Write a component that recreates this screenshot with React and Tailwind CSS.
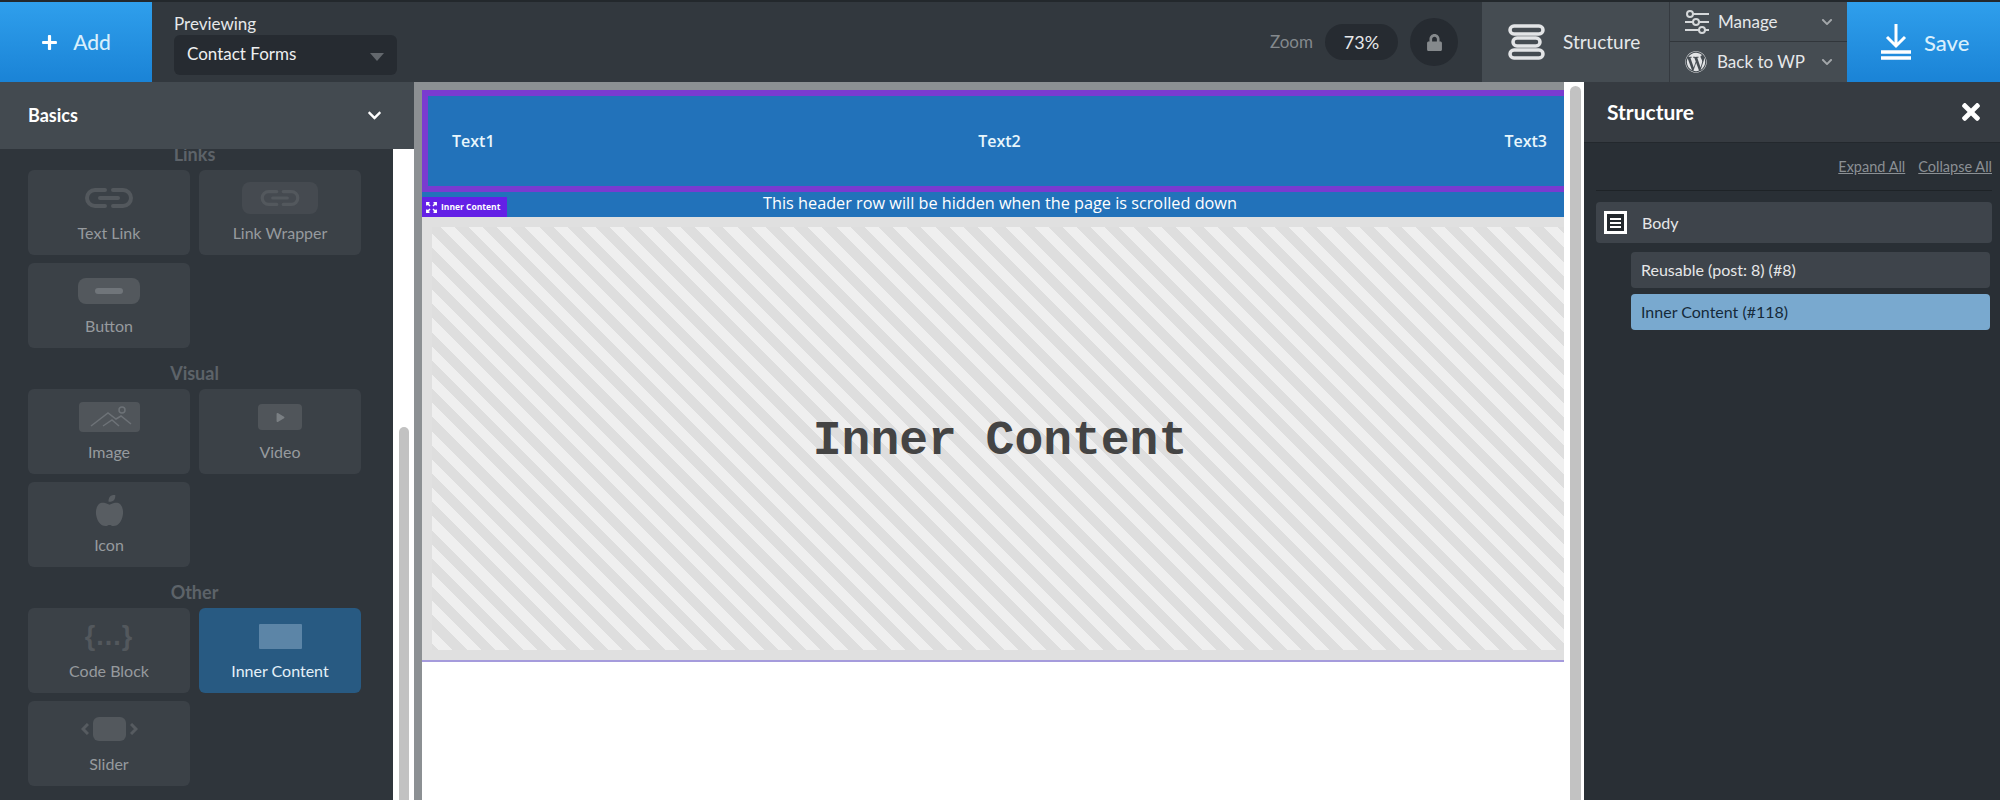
import React from "react";
import { FaLock, FaTimes, FaWordpress, FaAppleAlt, FaPlus, FaChevronDown, FaPlay } from "react-icons/fa";

const LinkGlyph = ({ w, h }) => (
  <svg width={w} height={h} viewBox="0 0 52 22" fill="none" stroke="#53585d" strokeWidth="4" strokeLinecap="round">
    <path d="M22 3H12a8 8 0 0 0 0 16h10" />
    <path d="M30 3h10a8 8 0 0 1 0 16H30" />
    <path d="M17 11h18" />
  </svg>
);

const Card = ({ label, active, children }) => (
  <div className={`h-[85px] w-[162px] rounded-md flex flex-col items-center ${active ? "bg-[#285a82] text-[#e4f0f8]" : "bg-[#3b4147] text-[#969a9e]"}`}>
    <div className="h-[50px] mt-[3px] flex items-center justify-center">{children}</div>
    <div className="text-[16px] leading-[20px]">{label}</div>
  </div>
);

const Heading = ({ children, className = "" }) => (
  <div className={`h-[33px] w-[333px] flex items-end justify-center pb-[4px] text-[18px] leading-[24px] font-bold text-[#5d6369] ${className}`}>{children}</div>
);

const Row = ({ children }) => <div className="flex gap-[9px] mb-[8px]">{children}</div>;

const Sidebar = () => (
  <aside className="w-[414px] shrink-0 flex flex-col">
    <div className="h-[67px] shrink-0 bg-[#434a50] pl-[28px] pr-[32px] flex items-center justify-between text-white font-bold text-[18px]">
      <span>Basics</span>
      <FaChevronDown className="text-[15px]" />
    </div>
    <div className="flex-1 flex min-h-0 overflow-hidden">
      <div className="w-[393px] bg-[#2f353b] pl-[28px] overflow-hidden">
        <Heading className="-mt-[12px]">Links</Heading>
        <Row>
          <Card label="Text Link"><LinkGlyph w={52} h={22} /></Card>
          <Card label="Link Wrapper">
            <div className="w-[76px] h-[32px] rounded-lg bg-[#454a50] flex items-center justify-center"><LinkGlyph w={42} h={18} /></div>
          </Card>
        </Row>
        <Row>
          <Card label="Button">
            <div className="w-[62px] h-[26px] rounded-lg bg-[#53585d] flex items-center justify-center"><div className="w-[28px] h-[6px] rounded-sm bg-[#70757a]" /></div>
          </Card>
        </Row>
        <Heading>Visual</Heading>
        <Row>
          <Card label="Image">
            <div className="w-[61px] h-[30px] rounded-sm bg-[#50555a]">
              <svg width="61" height="30" viewBox="0 0 61 30" fill="none" stroke="#6d7277" strokeWidth="1.5">
                <path d="M12 24 29 11l8 6 5-3 10 8M24 24l9-6 7 6" />
                <circle cx="43" cy="8" r="3" />
              </svg>
            </div>
          </Card>
          <Card label="Video">
            <div className="w-[44px] h-[26px] rounded-sm bg-[#50555a] flex items-center justify-center"><FaPlay className="text-[9px] text-[#7a7f83]" /></div>
          </Card>
        </Row>
        <Row>
          <Card label="Icon"><FaAppleAlt className="text-[#585d62] text-[31px]" /></Card>
        </Row>
        <Heading>Other</Heading>
        <Row>
          <Card label="Code Block">
            <span className="font-['Liberation_Sans',sans-serif] text-[#53585d] text-[27px] font-bold tracking-[1px]">{"{...}"}</span>
          </Card>
          <Card label="Inner Content" active>
            <div className="w-[43px] h-[25px] bg-[#5c85a7] rounded-[1px]" />
          </Card>
        </Row>
        <Row>
          <Card label="Slider">
            <div className="flex items-center gap-[4px]">
              <svg width="8" height="12" viewBox="0 0 8 12" fill="none" stroke="#565b60" strokeWidth="3"><path d="M7 1 2 6l5 5" /></svg>
              <div className="w-[33px] h-[24px] rounded-md bg-[#53585d]" />
              <svg width="8" height="12" viewBox="0 0 8 12" fill="none" stroke="#565b60" strokeWidth="3"><path d="m1 1 5 5-5 5" /></svg>
            </div>
          </Card>
        </Row>
      </div>
      <div className="flex-1 bg-white pl-[6px] pt-[278px]">
        <div className="w-[10px] h-full rounded-t-md bg-[#c2c2c2]" />
      </div>
    </div>
  </aside>
);

const Canvas = () => (
  <main className="w-[1150px] shrink-0 bg-[#8c9093] pt-[8px] pl-[8px] overflow-hidden flex flex-col font-['Open_Sans',sans-serif]">
    <div className="w-[1156px] flex-1 bg-white flex flex-col">
      <div className="h-[102px] shrink-0 bg-[#2272ba] border-[6px] border-[#7a3bd0] pl-[24px] pr-[25px] flex items-center justify-between text-[#e8f6fc] text-[16px] font-semibold">
        <span>Text1</span>
        <span>Text2</span>
        <span>Text3</span>
      </div>
      <div className="h-[25px] shrink-0 bg-[#2272ba] relative flex items-center justify-center text-white text-[16.25px] font-medium">
        <span className="-mt-[2px]">This header row will be hidden when the page is scrolled down</span>
        <div className="absolute left-0 top-[5px] h-[20px] w-[85px] bg-[#6420e6] text-white text-[8.5px] font-bold whitespace-nowrap flex items-center pl-[4px] gap-[4px]">
          <svg width="11" height="11" viewBox="0 0 11 11" fill="none" stroke="#fff" strokeWidth="1.5" className="shrink-0">
            <path d="M.8 3.500V.8h2.700M7.500.8h2.700v2.700M.8 7.500v2.700h2.700M7.500 10.200h2.700V7.500M1.500 1.500l2.500 2.500M9.500 1.500 7 4M1.500 9.500 4 7M9.500 9.500 7 7" />
          </svg>
          <span>Inner Content</span>
        </div>
      </div>
      <div className="h-[443px] shrink-0 bg-[#e0e0e0] pt-[10px] pb-[10px] pl-[10px]">
        <div className="h-full bg-[repeating-linear-gradient(45deg,#dedede,#dedede_4.8px,#efefef_4.8px,#efefef_14.8px,#dedede_14.8px,#dedede_20px)] flex items-center justify-center pt-[4px] pr-[10px] font-['Liberation_Mono',monospace] font-bold text-[48px] text-[#444444]">
          Inner Content
        </div>
      </div>
      <div className="h-[2px] shrink-0 bg-[#a59bdc]" />
    </div>
  </main>
);

const CanvasScroll = () => (
  <div className="w-[20px] shrink-0 bg-white pl-[6px] pt-[4px]">
    <div className="w-[11px] h-full rounded-t-md bg-[#c2c2c2]" />
  </div>
);

const StructurePanel = () => (
  <aside className="flex-1 bg-[#292f35] flex flex-col">
    <div className="h-[61px] bg-[#363b41] pl-[23px] pr-[16px] flex items-center justify-between border-b border-[#23282d]">
      <span className="text-white text-[21px] font-bold">Structure</span>
      <FaTimes className="text-white text-[26px]" />
    </div>
    <div className="pl-[12px] pr-[8px]">
      <div className="h-[48px] flex items-center justify-end gap-[13px] border-b border-[#1e2327] text-[14.5px] text-[#8b9094] underline">
        <span>Expand All</span>
        <span>Collapse All</span>
      </div>
      <div className="mt-[11px] h-[41px] rounded-sm bg-[#3e444b] flex items-center pl-[8px] gap-[15px] text-[#e6e7e8] text-[16px]">
        <div className="w-[23px] h-[23px] border-[3px] border-white flex flex-col justify-center gap-[2px] px-[3px] bg-[#23282d]">
          <div className="h-[2px] bg-white" />
          <div className="h-[2px] bg-white" />
          <div className="h-[2px] bg-white" />
        </div>
        <span>Body</span>
      </div>
      <div className="ml-[35px] mr-[2px] mt-[9px] flex flex-col gap-[6px] text-[16px]">
        <div className="h-[36px] rounded-sm bg-[#3e444b] flex items-center pl-[10px] text-[#e6e7e8]">Reusable (post: 8) (#8)</div>
        <div className="h-[36px] rounded-sm bg-[#79a9cf] flex items-center pl-[10px] text-[#152a3a]">Inner Content (#118)</div>
      </div>
    </div>
  </aside>
);

const TopBar = () => (
  <header className="h-[82px] shrink-0 bg-[#32383e] border-t-2 border-[#23282c] flex items-stretch text-[#e6e8ea]">
    <div className="w-[152px] bg-gradient-to-b from-[#2f9fec] to-[#1a83d6] flex items-center justify-center gap-[15px] text-[#d8effc] text-[21px] font-medium">
      <FaPlus className="text-white text-[17px]" />
      <span>Add</span>
    </div>
    <div className="pl-[22px] pt-[12px]">
      <div className="text-[17px] leading-[20px]">Previewing</div>
      <div className="w-[223px] h-[40px] mt-[1px] pb-[2px] rounded-md bg-[#262b31] pl-[13px] pr-[13px] flex items-center justify-between text-[17px] text-[#eeeff0]">
        <span>Contact Forms</span>
        <div className="mt-[6px] border-x-[7px] border-t-[8px] border-x-transparent border-t-[#63686d]" />
      </div>
    </div>
    <div className="flex-1" />
    <div className="flex items-center pr-[24px]">
      <span className="text-[#84898d] text-[17px] mr-[12px]">Zoom</span>
      <div className="w-[73px] h-[36px] rounded-full bg-[#262b31] flex items-center justify-center text-[18px] mr-[12px]">73%</div>
      <div className="w-[48px] h-[48px] rounded-full bg-[#262b31] flex items-center justify-center"><FaLock className="text-[#85898c] text-[17px]" /></div>
    </div>
    <div className="w-[187px] bg-[#454c52] flex items-center pl-[26px] gap-[18px] text-[19px]">
      <svg width="37" height="36" viewBox="0 0 37 36" fill="none" stroke="#e2e4e6" strokeWidth="3.500">
        <rect x="2" y="2" width="33" height="8" rx="4" />
        <rect x="5" y="14" width="27" height="8" rx="4" />
        <rect x="2" y="26" width="33" height="8" rx="4" />
      </svg>
      <span>Structure</span>
    </div>
    <div className="w-[178px] flex flex-col bg-[#454c52] border-l border-[#353a40] text-[17px]">
      <div className="h-[40px] flex items-center pl-[14px] pr-[14px] border-b border-[#31363b]">
        <svg width="26" height="26" viewBox="0 0 26 26" fill="none" stroke="#d5d8da" strokeWidth="2">
          <path d="M9 5h16M1 13h8M15 13h10M1 21h14M21 21h4" />
          <circle cx="6" cy="5" r="3" /><circle cx="12" cy="13" r="3" /><circle cx="18" cy="21" r="3" />
        </svg>
        <span className="ml-[8px] flex-1">Manage</span>
        <FaChevronDown className="text-[12px] text-[#a3a7aa]" />
      </div>
      <div className="flex-1 flex items-center pl-[15px] pr-[14px]">
        <FaWordpress className="text-[22px] text-[#e2e4e6]" />
        <span className="ml-[10px] flex-1">Back to WP</span>
        <FaChevronDown className="text-[12px] text-[#a3a7aa]" />
      </div>
    </div>
    <div className="w-[153px] shrink-0 bg-gradient-to-b from-[#2f9fec] to-[#1a83d6] flex items-center pl-[34px] gap-[13px] text-[#d8effc] text-[22px] font-medium">
      <svg width="30" height="36" viewBox="0 0 30 36" fill="none" stroke="#fff" strokeWidth="3">
        <path d="M15 0v21M6 13l9 9 9-9" />
        <path d="M0 28h30M0 34h30" strokeWidth="3.500" />
      </svg>
      <span>Save</span>
    </div>
  </header>
);

export default function App() {
  return (
    <div className="w-[2000px] h-[800px] overflow-hidden flex flex-col font-['Lato',sans-serif]">
      <TopBar />
      <div className="flex-1 min-h-0 flex">
        <Sidebar />
        <Canvas />
        <CanvasScroll />
        <StructurePanel />
      </div>
    </div>
  );
}
